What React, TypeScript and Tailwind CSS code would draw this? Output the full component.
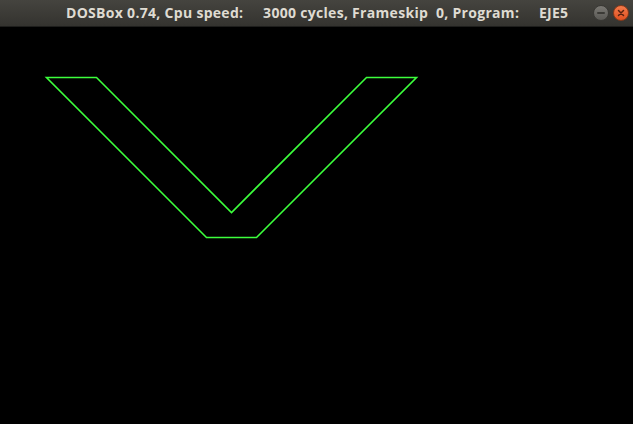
export default function App() {
  const pts = "46.5,77.5 96.5,77.5 231.5,212.5 366.5,77.5 416.5,77.5 256.5,237.5 206.5,237.5";
  return (
    <div className="w-[633px] h-[424px] bg-black flex flex-col overflow-hidden">
      <div className="h-[27px] shrink-0 bg-gradient-to-b from-[#45443f] to-[#34332f] border-b border-[#1e1e1c] flex items-center relative">
        <div
          className="absolute left-[66px] top-[4px] whitespace-pre text-[14px] tracking-[0.3px] font-bold text-[#dfdbd2] leading-[18px]"
          style={{ fontFamily: '"Open Sans", "DejaVu Sans", sans-serif' }}
        >
          {"DOSBox 0.74, Cpu speed:     3000 cycles, Frameskip  0, Program:     EJE5"}
        </div>
        <div className="absolute left-[593px] top-[5px] w-[16px] h-[16px] rounded-full bg-gradient-to-b from-[#7a7873] to-[#5a5955] border border-[#3a3935] flex items-center justify-center">
          <div className="w-[8px] h-[2px] bg-[#3b3a36] rounded" />
        </div>
        <div className="absolute left-[613px] top-[5px] w-[16px] h-[16px] rounded-full bg-gradient-to-b from-[#f47a4a] to-[#e0501f] border border-[#8a3a1a] flex items-center justify-center">
          <svg width="8" height="8" viewBox="0 0 8 8">
            <path d="M1.5 1.5 L6.5 6.5 M6.5 1.5 L1.5 6.5" stroke="#5a2210" strokeWidth="1.5" strokeLinecap="round" />
          </svg>
        </div>
      </div>
      <div className="flex-1 relative">
        <svg width="633" height="397" viewBox="0 27 633 397" className="block">
          <polygon points={pts} fill="none" stroke="#3cff3c" strokeWidth="1.6" />
        </svg>
      </div>
    </div>
  );
}
